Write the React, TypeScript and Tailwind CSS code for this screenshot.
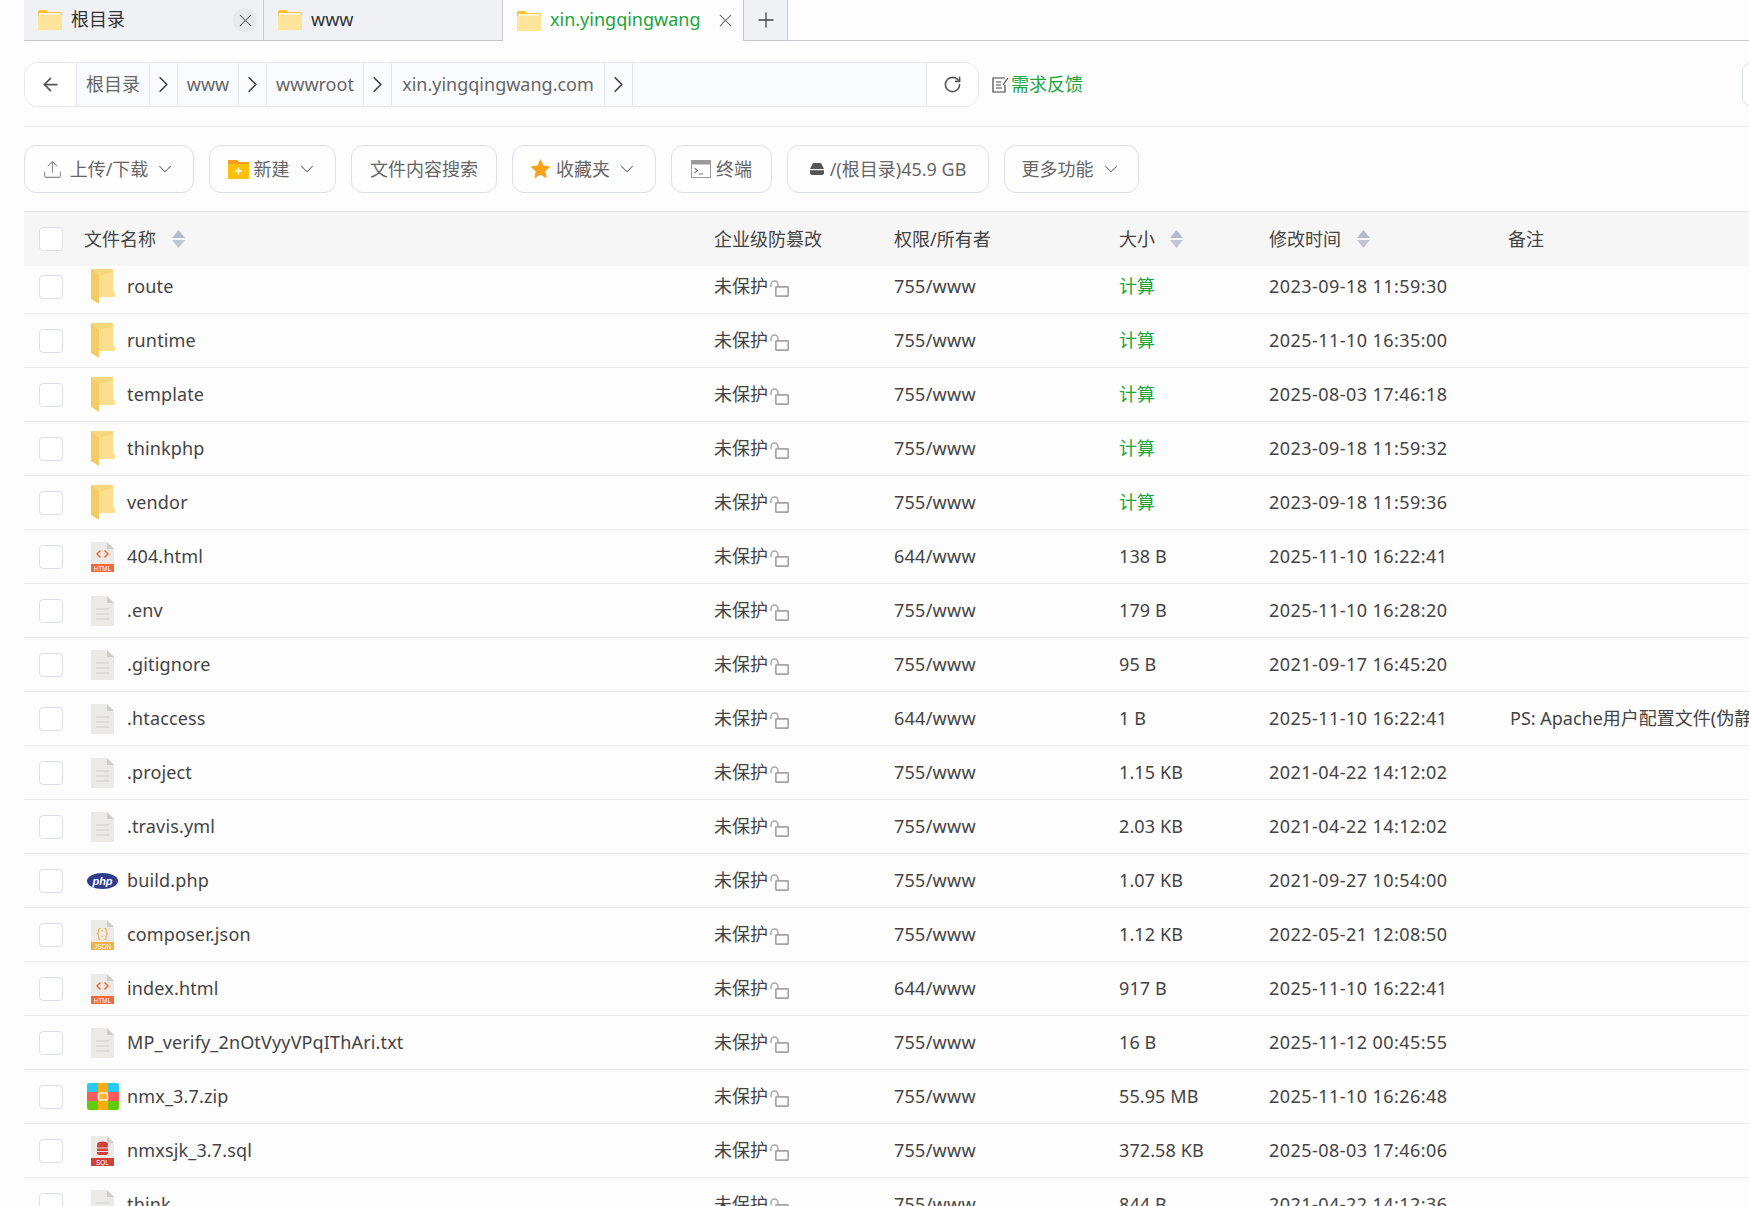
import { ArrowLeft, ChevronDown, ChevronRight, Plus, RotateCw, Upload, X } from "lucide-react";

type FileRow = {
    name: string;
    icon: string;
    perm: string;
    size: string;
    time: string;
    note?: string;
};

const rows: FileRow[] = [
    { name: "route", icon: "folder", perm: "755/www", size: "计算", time: "2023-09-18 11:59:30" },
    { name: "runtime", icon: "folder", perm: "755/www", size: "计算", time: "2025-11-10 16:35:00" },
    { name: "template", icon: "folder", perm: "755/www", size: "计算", time: "2025-08-03 17:46:18" },
    { name: "thinkphp", icon: "folder", perm: "755/www", size: "计算", time: "2023-09-18 11:59:32" },
    { name: "vendor", icon: "folder", perm: "755/www", size: "计算", time: "2023-09-18 11:59:36" },
    { name: "404.html", icon: "html", perm: "644/www", size: "138 B", time: "2025-11-10 16:22:41" },
    { name: ".env", icon: "file", perm: "755/www", size: "179 B", time: "2025-11-10 16:28:20" },
    { name: ".gitignore", icon: "file", perm: "755/www", size: "95 B", time: "2021-09-17 16:45:20" },
    { name: ".htaccess", icon: "file", perm: "644/www", size: "1 B", time: "2025-11-10 16:22:41", note: "PS: Apache用户配置文件(伪静态)" },
    { name: ".project", icon: "file", perm: "755/www", size: "1.15 KB", time: "2021-04-22 14:12:02" },
    { name: ".travis.yml", icon: "file", perm: "755/www", size: "2.03 KB", time: "2021-04-22 14:12:02" },
    { name: "build.php", icon: "php", perm: "755/www", size: "1.07 KB", time: "2021-09-27 10:54:00" },
    { name: "composer.json", icon: "json", perm: "755/www", size: "1.12 KB", time: "2022-05-21 12:08:50" },
    { name: "index.html", icon: "html", perm: "644/www", size: "917 B", time: "2025-11-10 16:22:41" },
    { name: "MP_verify_2nOtVyyVPqIThAri.txt", icon: "file", perm: "755/www", size: "16 B", time: "2025-11-12 00:45:55" },
    { name: "nmx_3.7.zip", icon: "zip", perm: "755/www", size: "55.95 MB", time: "2025-11-10 16:26:48" },
    { name: "nmxsjk_3.7.sql", icon: "sql", perm: "755/www", size: "372.58 KB", time: "2025-08-03 17:46:06" },
    { name: "think", icon: "file", perm: "755/www", size: "844 B", time: "2021-04-22 14:12:36" },
];

function TabFolder() {
    return (
        <svg width="24" height="20" viewBox="0 0 24 20" className="shrink-0">
            <path d="M0 2a2 2 0 0 1 2-2h6l2 2h12a2 2 0 0 1 2 2v14a2 2 0 0 1-2 2H2a2 2 0 0 1-2-2z" fill="#fbc02d" />
            <rect x="0" y="4" width="24" height="16" rx="1.5" fill="#ffe59a" />
            <rect x="1.5" y="3" width="21" height="1.4" fill="#fff" />
        </svg>
    );
}

function SideFolder() {
    return (
        <svg width="24" height="35" viewBox="0 0 24 35">
            <path d="M0 0h22v22l2 2v4H0z" fill="#f8d67c" />
            <path d="M8 7 22 3v19l2 3v3H8z" fill="#fbdf8e" />
            <path d="M0 0l8 7v28l-8-5z" fill="#f5cb63" />
        </svg>
    );
}

function PageBase({ children, band, label }: { children?: React.ReactNode; band?: string; label?: string }) {
    return (
        <svg width="23" height="30" viewBox="0 0 23 30">
            <path d="M0 0h16l7 7v23H0z" fill="#eceae6" />
            <path d="M16 0l7 7h-7z" fill="#cfcdc6" />
            {children}
            {band && <rect x="0" y="22" width="23" height="8" fill={band} />}
            {label && (
                <text x="11.5" y="28.6" fontSize="6.4" textAnchor="middle" fill="#fff" fontFamily="Liberation Sans, sans-serif">
                    {label}
                </text>
            )}
        </svg>
    );
}

function FileIcon({ type }: { type: string }) {
    if (type === "folder") return <SideFolder />;
    if (type === "html") {
        return (
            <PageBase band="#f4683a" label="HTML">
                <path d="M9.5 8.5l-3.5 3.5 3.5 3.5M13.5 8.5l3.5 3.5-3.5 3.5" fill="none" stroke="#f4683a" strokeWidth="1.5" />
            </PageBase>
        );
    }
    if (type === "json") {
        return (
            <PageBase band="#f0b04a" label="JSON">
                <text x="11.5" y="16.5" fontSize="12" textAnchor="middle" fill="#f0b04a" fontFamily="Liberation Sans, sans-serif">{"{:}"}</text>
            </PageBase>
        );
    }
    if (type === "sql") {
        return (
            <PageBase band="#d2403a" label="SQL">
                <ellipse cx="11.5" cy="8" rx="5.5" ry="2.5" fill="#d2403a" />
                <rect x="6" y="8" width="11" height="11" rx="2" fill="#d2403a" />
                <path d="M6 12h11M6 15.5h11" stroke="#f3ddd8" strokeWidth="1" />
            </PageBase>
        );
    }
    if (type === "php") {
        return (
            <svg width="31" height="16" viewBox="0 0 31 16">
                <ellipse cx="15.5" cy="8" rx="15.5" ry="8" fill="#2f3c8c" />
                <text x="15.5" y="11.5" fontSize="11" fontWeight="700" fontStyle="italic" textAnchor="middle" fill="#fff" fontFamily="Liberation Sans, sans-serif">php</text>
            </svg>
        );
    }
    if (type === "zip") {
        return (
            <svg width="32" height="27" viewBox="0 0 32 27">
                <path d="M2 0h9v9H0V2a2 2 0 0 1 2-2z" fill="#29c9f0" />
                <path d="M21 0h9a2 2 0 0 1 2 2v7H21z" fill="#29c9f0" />
                <rect x="0" y="9" width="32" height="9" fill="#fb5a5f" />
                <path d="M0 18h11v9H2a2 2 0 0 1-2-2z" fill="#62cc0a" />
                <path d="M21 18h11v7a2 2 0 0 1-2 2h-9z" fill="#62cc0a" />
                <rect x="11" y="0" width="10" height="27" fill="#fdab0d" />
                <rect x="11.5" y="10" width="9" height="7" rx="1" fill="#ffb52e" stroke="#fff3d8" strokeWidth="1.5" />
            </svg>
        );
    }
    return (
        <PageBase>
            <path d="M5 13h13M5 18h13M5 23h13" stroke="#d9d8d4" strokeWidth="1.5" />
        </PageBase>
    );
}

function SortIcon() {
    return (
        <svg width="13" height="18" viewBox="0 0 13 18" className="shrink-0">
            <path d="M6.5 0L13 8H0z" fill="#b4bccb" />
            <path d="M6.5 18L13 10H0z" fill="#c0c7d4" />
        </svg>
    );
}

function LockIcon() {
    return (
        <svg width="19" height="17" viewBox="0 0 19 17" className="shrink-0 mt-[3px] ml-[2px]" fill="none">
            <path d="M1 7V4.5a3.5 3.5 0 0 1 7 0V7" stroke="#a8a8a8" strokeWidth="1.5" />
            <rect x="5.8" y="6.8" width="12.4" height="9.4" rx="1" stroke="#a4a4a4" strokeWidth="1.7" />
        </svg>
    );
}

function Tab({ label, active, close, w }: { label: string; active?: boolean; close?: boolean; w: string }) {
    return (
        <div className={`${w} h-[41px] flex items-center pl-[14px] pr-[6px] gap-[9px] ${active ? "bg-[#fdfdfd]" : "bg-[#eff1f5] border-b border-b-[#c4c6cc] border-r border-r-[#c9cbd2]"}`}>
            <TabFolder />
            <span className={`flex-1 min-w-0 whitespace-nowrap pb-[2px] text-[18px] ${active ? "text-[#20a53a]" : "text-[#333]"}`}>{label}</span>
            {close && (
                <span className={`w-[24px] h-[24px] rounded-full flex items-center justify-center shrink-0 ${active ? "" : "bg-[#e8e9ed]"}`}>
                    <X size={21} strokeWidth={1.2} className="text-[#555]" />
                </span>
            )}
        </div>
    );
}

function Crumb({ label, w }: { label: string; w: string }) {
    return (
        <>
            <div className={`${w} h-full flex items-center justify-center border-r border-[#e4e7ee] text-[18px] text-[#666]`}>{label}</div>
            <div className="w-[28px] h-full flex items-center justify-center border-r border-[#e4e7ee]">
                <ChevronRight size={29} strokeWidth={1.5} className="text-[#444]" />
            </div>
        </>
    );
}

function ToolButton({ w, children }: { w: string; children: React.ReactNode }) {
    return (
        <div className={`${w} h-[48px] rounded-[12px] border border-[#dcdfe6] bg-[#fefefe] flex items-center justify-center text-[18px] text-[#666] shrink-0`}>
            {children}
        </div>
    );
}

export default function App() {
    return (
        <div
            className="w-[1749px] h-[1206px] overflow-hidden bg-[#fdfdfd] text-[#444]"
            style={{ fontFamily: '"Noto Sans", "Noto Sans CJK SC", sans-serif' }}
        >
            {/* tabs */}
            <div className="flex h-[41px] pl-[24px]">
                <Tab label="根目录" close w="w-[240px]" />
                <Tab label="www" w="w-[239px]" />
                <Tab label="xin.yingqingwang" active close w="w-[240px]" />
                <div className="w-[45px] h-[41px] bg-[#eff1f5] border-l border-r border-b border-[#c4c6cc] flex items-center justify-center">
                    <Plus size={24} strokeWidth={1.3} className="text-[#444]" />
                </div>
                <div className="flex-1 border-b border-[#c8c8d0]" />
            </div>

            {/* address bar */}
            <div className="flex items-center h-[45px] mt-[21px] pl-[24px]">
                <div className="w-[955px] h-[45px] flex border border-[#e4e7ee] rounded-[14px] overflow-hidden bg-[#f9fbfe]">
                    <div className="w-[52px] h-full bg-white border-r border-[#e4e7ee] flex items-center justify-center">
                        <ArrowLeft size={21} strokeWidth={2} className="text-[#555]" />
                    </div>
                    <Crumb label="根目录" w="w-[73px]" />
                    <Crumb label="www" w="w-[61px]" />
                    <Crumb label="wwwroot" w="w-[97px]" />
                    <Crumb label="xin.yingqingwang.com" w="w-[213px]" />
                    <div className="flex-1" />
                    <div className="w-[52px] h-full bg-white border-l border-[#e4e7ee] flex items-center justify-center">
                        <RotateCw size={19} strokeWidth={2} className="text-[#555]" />
                    </div>
                </div>
                <svg width="17" height="16" viewBox="0 0 17 16" fill="none" className="ml-[13px] mr-[2px]">
                    <path d="M13 1H1v14h12V8M4 5h5M4 8h5M4 11h6" stroke="#444" strokeWidth="1.2" />
                    <path d="M16 1l-5 7" stroke="#444" strokeWidth="1.2" />
                </svg>
                <span className="text-[18px] text-[#20a53a]">需求反馈</span>
                <div className="ml-auto w-[20px] h-[45px] -mr-[13px] rounded-[12px] border border-[#dcdfe6] bg-white" />
            </div>

            <div className="ml-[24px] mt-[19px] border-t border-[#e6e6ee]" />

            {/* toolbar */}
            <div className="flex gap-[15px] ml-[24px] mt-[18px]">
                <ToolButton w="w-[170px]">
                    <Upload size={21} strokeWidth={1.2} className="text-[#888] mr-[7px]" />
                    上传/下载
                    <ChevronDown size={22} strokeWidth={1.1} className="ml-[6px] text-[#666]" />
                </ToolButton>
                <ToolButton w="w-[127px]">
                    <svg width="21" height="20" viewBox="0 0 21 20" className="mr-[5px]">
                        <path d="M0 1h9l2 2h10v17H0z" fill="#ffc107" />
                        <path d="M0 1h9l2 2h10v2H0z" fill="#f59a23" />
                        <path d="M10.5 8.5v7M7 12h7" stroke="#fff" strokeWidth="1.3" />
                    </svg>
                    新建
                    <ChevronDown size={22} strokeWidth={1.1} className="ml-[6px] text-[#666]" />
                </ToolButton>
                <ToolButton w="w-[146px]">文件内容搜索</ToolButton>
                <ToolButton w="w-[144px]">
                    <svg width="21" height="20" viewBox="0 0 21 20" className="mr-[5px]">
                        <path d="M10.5 0l3 6.6 7.2.8-5.4 4.8 1.5 7.3-6.3-3.7-6.3 3.7 1.5-7.3L.3 7.4l7.2-.8z" fill="#f7a21c" />
                    </svg>
                    收藏夹
                    <ChevronDown size={22} strokeWidth={1.1} className="ml-[6px] text-[#666]" />
                </ToolButton>
                <ToolButton w="w-[101px]">
                    <svg width="20" height="18" viewBox="0 0 20 18" fill="none" className="mr-[5px]">
                        <rect x="0.5" y="0.5" width="19" height="17" fill="#fff" stroke="#9a9a9a" />
                        <rect x="0.5" y="0.5" width="19" height="4" fill="#9a9a9a" />
                        <path d="M3.5 8l3 2.5-3 2.5M8 14h4" stroke="#777" strokeWidth="1.1" />
                    </svg>
                    终端
                </ToolButton>
                <ToolButton w="w-[202px]">
                    <svg width="14" height="12" viewBox="0 0 14 12" className="mr-[6px]">
                        <path d="M3 0h8l3 6v4a2 2 0 0 1-2 2H2a2 2 0 0 1-2-2V6z" fill="#555" />
                        <rect x="0" y="6" width="14" height="1.2" fill="#fff" />
                    </svg>
                    /(根目录)45.9 GB
                </ToolButton>
                <ToolButton w="w-[135px]">
                    更多功能
                    <ChevronDown size={22} strokeWidth={1.1} className="ml-[6px] text-[#666]" />
                </ToolButton>
            </div>

            {/* table */}
            <div className="ml-[24px] mt-[18px]">
                <div className="h-[55px] bg-[#f6f6f6] border-t border-[#e6e6e6] flex items-center text-[18px] text-[#444]">
                    <div className="w-[690px] flex items-center pl-[15px]">
                        <div className="w-[24px] h-[24px] rounded-[4px] border border-[#dcdfe6] bg-white shrink-0" />
                        <span className="ml-[21px]">文件名称</span>
                        <span className="ml-[16px]"><SortIcon /></span>
                    </div>
                    <div className="w-[180px]">企业级防篡改</div>
                    <div className="w-[225px]">权限/所有者</div>
                    <div className="w-[150px] flex items-center">
                        <span>大小</span>
                        <span className="ml-[15px]"><SortIcon /></span>
                    </div>
                    <div className="w-[239px] flex items-center">
                        <span>修改时间</span>
                        <span className="ml-[16px]"><SortIcon /></span>
                    </div>
                    <div>备注</div>
                </div>

                {rows.map((row, i) => (
                    <div
                        key={row.name}
                        className={`flex items-center border-b border-[#ebebeb] text-[18px] text-[#444] whitespace-nowrap ${i === 0 ? "h-[48px] pb-[6px]" : "h-[54px]"}`}
                    >
                        <div className="w-[690px] shrink-0 flex items-center pl-[15px]">
                            <div className="w-[24px] h-[24px] rounded-[4px] border border-[#dcdfe6] bg-white shrink-0" />
                            <div className="w-[43px] ml-[21px] pr-[6px] flex justify-center shrink-0">
                                <FileIcon type={row.icon} />
                            </div>
                            <span className="tracking-[0.15px]">{row.name}</span>
                        </div>
                        <div className="w-[180px] shrink-0 flex items-center">
                            <span>未保护</span>
                            <LockIcon />
                        </div>
                        <div className="w-[225px] shrink-0 tracking-[0.25px]">{row.perm}</div>
                        <div className={`w-[150px] shrink-0 tracking-[0.1px] ${row.size === "计算" ? "text-[#20a53a]" : ""}`}>{row.size}</div>
                        <div className="w-[241px] shrink-0 tracking-[0.45px]">{row.time}</div>
                        <div className="flex-1 min-w-0 overflow-hidden">{row.note}</div>
                    </div>
                ))}
            </div>
        </div>
    );
}
